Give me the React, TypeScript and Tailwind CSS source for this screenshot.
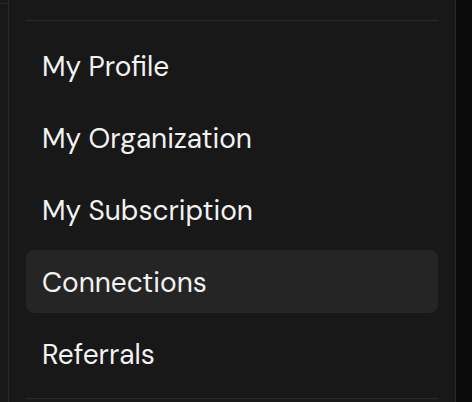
export default function App() {
  const items = [
    "My Profile",
    "My Organization",
    "My Subscription",
    "Connections",
    "Referrals",
  ];
  const active = "Connections";

  return (
    <div
      className="flex h-[402px] w-[472px] overflow-hidden bg-[#0b0b0b]"
      style={{ fontFamily: '"DM Sans", Inter, "Noto Sans", sans-serif' }}
    >
      <div className="w-[9px] shrink-0 border-r border-[#2a2a2a] bg-[#181818]">
        <div className="mt-[3px] h-px w-full bg-[#2a2a2a]" />
      </div>
      <div className="w-[447px] shrink-0 border-r border-[#2a2a2a] bg-[#181818] px-[17px] pt-5">
        <div className="border-t border-[#2a2a2a] pt-[13px] pb-[13px]">
          <nav className="flex flex-col gap-[9px]">
            {items.map((item) => (
              <div
                key={item}
                className={
                  "flex h-[63px] items-center rounded-lg pl-4 pt-[2px] text-[28px] text-[#f2f2f2] " +
                  (item === active ? "bg-[#252525]" : "")
                }
              >
                {item}
              </div>
            ))}
          </nav>
        </div>
        <div className="border-t border-[#2a2a2a]" />
      </div>
    </div>
  );
}
